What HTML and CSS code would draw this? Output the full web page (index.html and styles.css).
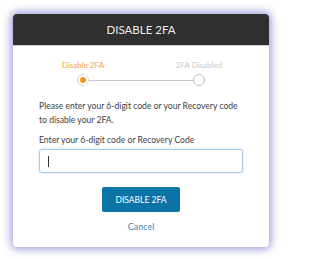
FILE: index.html
```html
<!DOCTYPE html>
<html>
<head>
<meta charset="utf-8">
<link rel="stylesheet" href="styles.css">
</head>
<body>
<div class="dialog">
  <div class="header">DISABLE 2FA</div>
  <div class="content">
    <div class="stepper">
      <div class="labels">
        <span class="step-label active">Disable 2FA</span>
        <span class="step-label">2FA Disabled</span>
      </div>
      <div class="track">
        <span class="dot active"></span>
        <span class="line"></span>
        <span class="dot"></span>
      </div>
    </div>
    <p class="intro">Please enter your 6-digit code or your Recovery code to disable your 2FA.</p>
    <div class="field-label">Enter your 6-digit code or Recovery Code</div>
    <div class="input"><span class="caret"></span></div>
    <div class="actions">
      <button class="btn">DISABLE 2FA</button>
      <a class="cancel">Cancel</a>
    </div>
  </div>
</div>
</body>
</html>
```
FILE: styles.css
```css
html, body {
  margin: 0;
  padding: 0;
  background: #ffffff;
}
body {
  font-family: Lato, "Open Sans", sans-serif;
  padding: 14px 12px 12px 13px;
}
.dialog {
  width: 256px;
  height: 233px;
  box-sizing: border-box;
  background: #fff;
  border-radius: 4px;
  overflow: hidden;
  box-shadow: 0 0 9px 2px rgba(110, 110, 200, 0.7);
}
.header {
  height: 32px;
  background: #2f2f2f;
  color: #ececec;
  font-size: 11.5px;
  display: flex;
  align-items: center;
  justify-content: center;
  border-bottom: 1px solid #d0d0d0;
  box-sizing: border-box;
}
.content {
  padding: 0 26px;
  display: flex;
  flex-direction: column;
}
.stepper {
  margin: 13px 14px 0 14px;
  display: flex;
  flex-direction: column;
  gap: 3px;
}
.labels {
  display: flex;
  justify-content: space-between;
}
.step-label {
  width: 60px;
  text-align: center;
  font-size: 8px;
  line-height: 12px;
  color: #c9c9c9;
  white-space: nowrap;
}
.step-label.active {
  color: #f6a24a;
}
.track {
  display: flex;
  align-items: center;
  padding: 0 24px;
  height: 12px;
}
.dot {
  width: 12px;
  height: 12px;
  box-sizing: border-box;
  border: 1.5px solid #bdbdbd;
  border-radius: 50%;
  background: #fff;
  display: flex;
  align-items: center;
  justify-content: center;
  flex: none;
}
.dot.active {
  border-color: #d8d2cc;
}
.dot.active::after {
  content: "";
  width: 6px;
  height: 6px;
  border-radius: 50%;
  background: #f7931e;
}
.line {
  flex: 1;
  height: 1px;
  background: #c8c8c8;
}
.intro {
  margin: 14px 0 0 0;
  font-size: 8.6px;
  line-height: 13.5px;
  color: #404040;
}
.field-label {
  margin-top: 6.5px;
  font-size: 8.6px;
  line-height: 13.5px;
  color: #404040;
}
.input {
  margin-top: 2px;
  height: 24px;
  box-sizing: border-box;
  border: 1px solid #a9cbea;
  border-radius: 3px;
  box-shadow: 0 0 2px rgba(120, 170, 230, 0.5);
  display: flex;
  align-items: center;
  padding-left: 8px;
}
.caret {
  width: 1px;
  height: 11px;
  background: #333;
}
.actions {
  display: flex;
  flex-direction: column;
  align-items: center;
}
.btn {
  margin-top: 14px;
  width: 78px;
  height: 25px;
  border: none;
  border-radius: 2px;
  background: #0b74a7;
  color: #fff;
  font-family: Lato, "Open Sans", sans-serif;
  font-size: 8.5px;
  padding: 0;
}
.cancel {
  margin-top: 8px;
  font-size: 9px;
  line-height: 13px;
  color: #4a84b6;
}
```
